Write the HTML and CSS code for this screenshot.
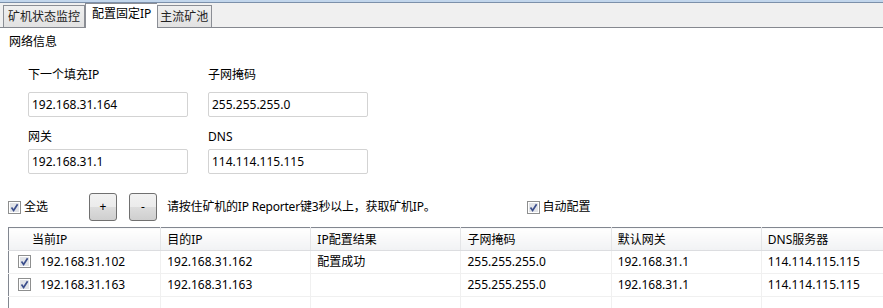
FILE: index.html
```html
<!DOCTYPE html>
<html lang="zh-CN">
<head>
  <meta charset="UTF-8" />
  <title>配置固定IP</title>
  <link rel="stylesheet" href="styles.css">
</head>
<body>

<div class="titlebar"></div>

<div class="tabbar">
  <div class="tab">矿机状态监控</div>
  <div class="tab active">配置固定IP</div>
  <div class="tab narrow">主流矿池</div>
</div>

<div class="section-title">网络信息</div>

<div class="net-grid">
  <div class="field">
    <label>下一个填充IP</label>
    <input type="text" value="192.168.31.164" />
  </div>
  <div class="field">
    <label>子网掩码</label>
    <input type="text" value="255.255.255.0" />
  </div>
  <div class="field tight">
    <label>网关</label>
    <input type="text" value="192.168.31.1" />
  </div>
  <div class="field tight">
    <label>DNS</label>
    <input type="text" value="114.114.115.115" />
  </div>
</div>

<div class="toolbar">
  <label class="check select-all">
    <svg class="chk" viewBox="0 0 13 13" width="13" height="13"><rect x="0.5" y="0.5" width="12" height="12" fill="#fff" stroke="#8e8f8f"/><rect x="2" y="2" width="9" height="9" fill="#e2e4e8"/><path d="M3.5 6.5 L5.6 9.4 L9.6 3.2" fill="none" stroke="#3b4e8c" stroke-width="1.7"/></svg>
    全选
  </label>
  <button class="btn">+</button>
  <button class="btn">-</button>
  <span class="hint">请按住矿机的IP Reporter键3秒以上，获取矿机IP。</span>
  <label class="check auto-config">
    <svg class="chk" viewBox="0 0 13 13" width="13" height="13"><rect x="0.5" y="0.5" width="12" height="12" fill="#fff" stroke="#8e8f8f"/><rect x="2" y="2" width="9" height="9" fill="#e2e4e8"/><path d="M3.5 6.5 L5.6 9.4 L9.6 3.2" fill="none" stroke="#3b4e8c" stroke-width="1.7"/></svg>
    自动配置
  </label>
</div>

<table class="ip-table">
  <colgroup>
    <col class="c-first" />
    <col class="c-col" />
    <col class="c-col" />
    <col class="c-col" />
    <col class="c-col" />
    <col class="c-col" />
  </colgroup>
  <thead>
    <tr>
      <th class="first">当前IP</th>
      <th>目的IP</th>
      <th>IP配置结果</th>
      <th>子网掩码</th>
      <th>默认网关</th>
      <th>DNS服务器</th>
    </tr>
  </thead>
  <tbody>
    <tr>
      <td class="first"><svg class="chk" viewBox="0 0 13 13" width="13" height="13"><rect x="0.5" y="0.5" width="12" height="12" fill="#fff" stroke="#8e8f8f"/><rect x="2" y="2" width="9" height="9" fill="#e2e4e8"/><path d="M3.5 6.5 L5.6 9.4 L9.6 3.2" fill="none" stroke="#3b4e8c" stroke-width="1.7"/></svg>192.168.31.102</td>
      <td>192.168.31.162</td>
      <td>配置成功</td>
      <td>255.255.255.0</td>
      <td>192.168.31.1</td>
      <td>114.114.115.115</td>
    </tr>
    <tr>
      <td class="first"><svg class="chk" viewBox="0 0 13 13" width="13" height="13"><rect x="0.5" y="0.5" width="12" height="12" fill="#fff" stroke="#8e8f8f"/><rect x="2" y="2" width="9" height="9" fill="#e2e4e8"/><path d="M3.5 6.5 L5.6 9.4 L9.6 3.2" fill="none" stroke="#3b4e8c" stroke-width="1.7"/></svg>192.168.31.163</td>
      <td>192.168.31.163</td>
      <td></td>
      <td>255.255.255.0</td>
      <td>192.168.31.1</td>
      <td>114.114.115.115</td>
    </tr>
    <tr>
      <td class="first"></td>
      <td></td>
      <td></td>
      <td></td>
      <td></td>
      <td></td>
    </tr>
  </tbody>
</table>

</body>
</html>
```

FILE: styles.css
```css
html, body {
  overflow: hidden;
}

body {
  margin: 0;
  font-family: "Noto Sans", "Noto Sans CJK SC", sans-serif;
  font-size: 12px;
  line-height: 16px;
  color: #000;
  background: #fff;
}

.titlebar {
  height: 2px;
  background: #c2d6ec;
  border-bottom: 1px solid #7c90aa;
}

.tabbar {
  display: flex;
  align-items: flex-end;
  height: 24px;
  padding-left: 3px;
  background: #f0f0f0;
  border-bottom: 1px solid #85888f;
}

.tab {
  height: 21px;
  line-height: 21px;
  padding: 0 4px;
  color: #222;
  background: linear-gradient(#f0f0f0, #e2e2e2);
  border: 1px solid #8b8e95;
  border-bottom: none;
}

.tab.narrow {
  padding: 0 3px 0 2px;
}

.tab.active {
  height: 24px;
  line-height: 20px;
  padding: 0 6px;
  margin-bottom: -1px;
  color: #000;
  background: #fff;
  border-right: none;
}

.section-title {
  margin: 6px 0 0 9px;
}

.net-grid {
  display: grid;
  grid-template-columns: 160px 160px;
  column-gap: 20px;
  row-gap: 12px;
  margin: 17px 0 0 28px;
}

.field {
  display: flex;
  flex-direction: column;
  gap: 9px;
}

.field.tight {
  gap: 4px;
}

.field input {
  box-sizing: border-box;
  width: 160px;
  height: 25px;
  margin: 0;
  padding: 0 3px;
  font: inherit;
  color: #000;
  border: 1px solid #d3d3d3;
  border-radius: 2px;
  outline: none;
}

.toolbar {
  display: flex;
  align-items: center;
  height: 28px;
  margin: 19px 0 0 8px;
}

.check {
  display: flex;
  align-items: center;
  gap: 3px;
}

.chk {
  display: block;
  flex-shrink: 0;
}

.select-all {
  width: 81px;
}

.btn {
  box-sizing: border-box;
  width: 28px;
  height: 28px;
  margin: 0 12px 0 0;
  padding: 0;
  font: inherit;
  color: #000;
  border: 1px solid #707070;
  border-radius: 3px;
  background: linear-gradient(#f2f2f2 0%, #ebebeb 50%, #dddddd 50%, #cfcfcf 100%);
}

.hint {
  margin-left: -2px;
  letter-spacing: -0.2px;
}

.auto-config {
  margin-left: 91px;
}

.ip-table {
  margin: 6px 0 0 8px;
  border-collapse: collapse;
  table-layout: fixed;
  width: 904px;
  border: 1px solid #828790;
}

.c-first {
  width: 152px;
}

.c-col {
  width: 150px;
}

.ip-table th {
  height: 23px;
  padding: 2px 6px 0;
  box-sizing: border-box;
  font-weight: normal;
  text-align: left;
  background: linear-gradient(#ffffff, #f1f2f4);
  border-right: 1px solid #e4e5e7;
  border-bottom: 1px solid #dcdde0;
}

.ip-table th.first {
  padding-left: 23px;
}

.ip-table td {
  height: 23px;
  padding: 0 6px;
  box-sizing: border-box;
  white-space: nowrap;
  border-right: 1px solid #f0f0f0;
  border-bottom: 1px solid #f0f0f0;
}

.ip-table td.first {
  padding-left: 9px;
}

.ip-table td.first .chk {
  display: inline-block;
  vertical-align: -2px;
  margin-right: 9px;
}
```
